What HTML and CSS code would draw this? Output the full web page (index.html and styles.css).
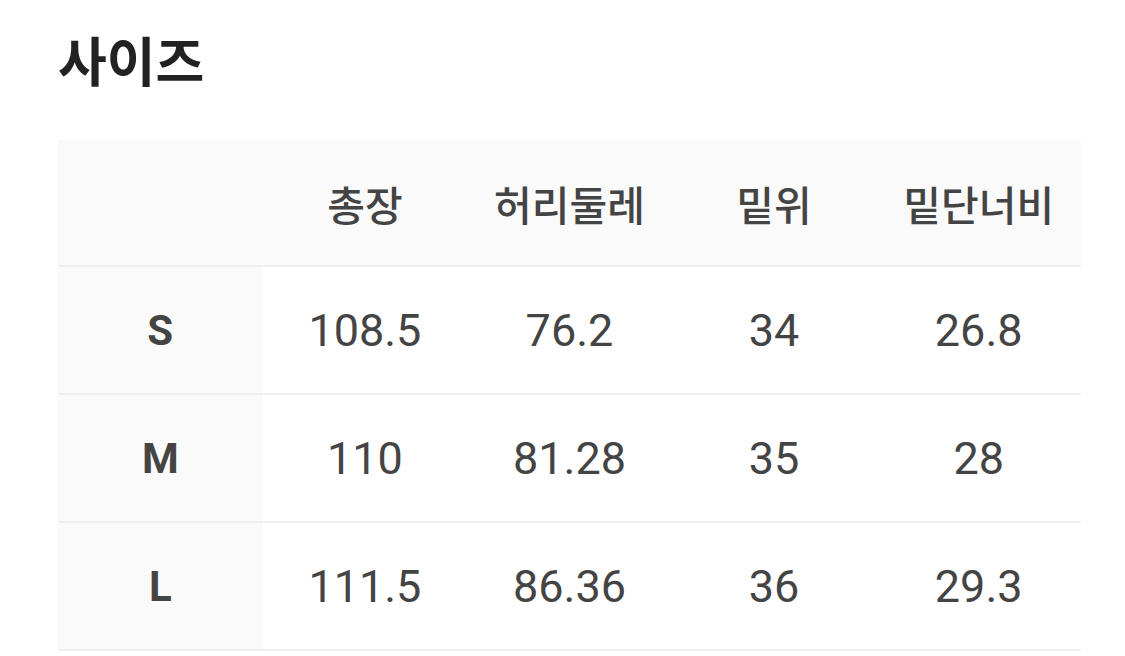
FILE: index.html
```html
<!DOCTYPE html>
<html lang="ko">
<head>
<meta charset="utf-8">
<link rel="stylesheet" href="styles.css">
</head>
<body>
<main class="page">
  <h1 class="title">사이즈</h1>
  <table class="size-table">
    <thead>
      <tr>
        <th class="corner"></th>
        <th>총장</th>
        <th>허리둘레</th>
        <th>밑위</th>
        <th>밑단너비</th>
      </tr>
    </thead>
    <tbody>
      <tr><th class="label">S</th><td>108.5</td><td>76.2</td><td>34</td><td>26.8</td></tr>
      <tr><th class="label">M</th><td>110</td><td>81.28</td><td>35</td><td>28</td></tr>
      <tr><th class="label">L</th><td>111.5</td><td>86.36</td><td>36</td><td>29.3</td></tr>
    </tbody>
  </table>
</main>
</body>
</html>
```
FILE: styles.css
```css
html, body {
  margin: 0;
  padding: 0;
  background: #ffffff;
}
.page {
  padding: 28px 44px 0 58px;
  font-family: Roboto, "Noto Sans CJK KR", sans-serif;
}
.title {
  margin: 0 0 50px 0;
  font-family: "Noto Sans CJK KR", sans-serif;
  font-size: 53px;
  font-weight: 700;
  line-height: 62px;
  color: #222222;
  letter-spacing: 0;
}
.size-table {
  width: 1023px;
  border-collapse: collapse;
  table-layout: fixed;
}
.size-table thead tr {
  background: #fafafa;
}
.size-table thead th {
  height: 125px;
  padding: 0;
  font-family: "Noto Sans CJK KR", sans-serif;
  font-size: 41px;
  font-weight: 500;
  color: #444444;
  text-align: center;
  border-bottom: 2px solid #efefef;
}
.size-table tbody th,
.size-table tbody td {
  height: 126px;
  padding: 0;
  text-align: center;
  font-size: 45px;
  color: #444444;
  border-bottom: 2px solid #efefef;
}
.size-table tbody td {
  font-weight: 400;
}
.size-table .label {
  background: #fafafa;
  font-weight: 700;
  font-size: 42px;
}
```
